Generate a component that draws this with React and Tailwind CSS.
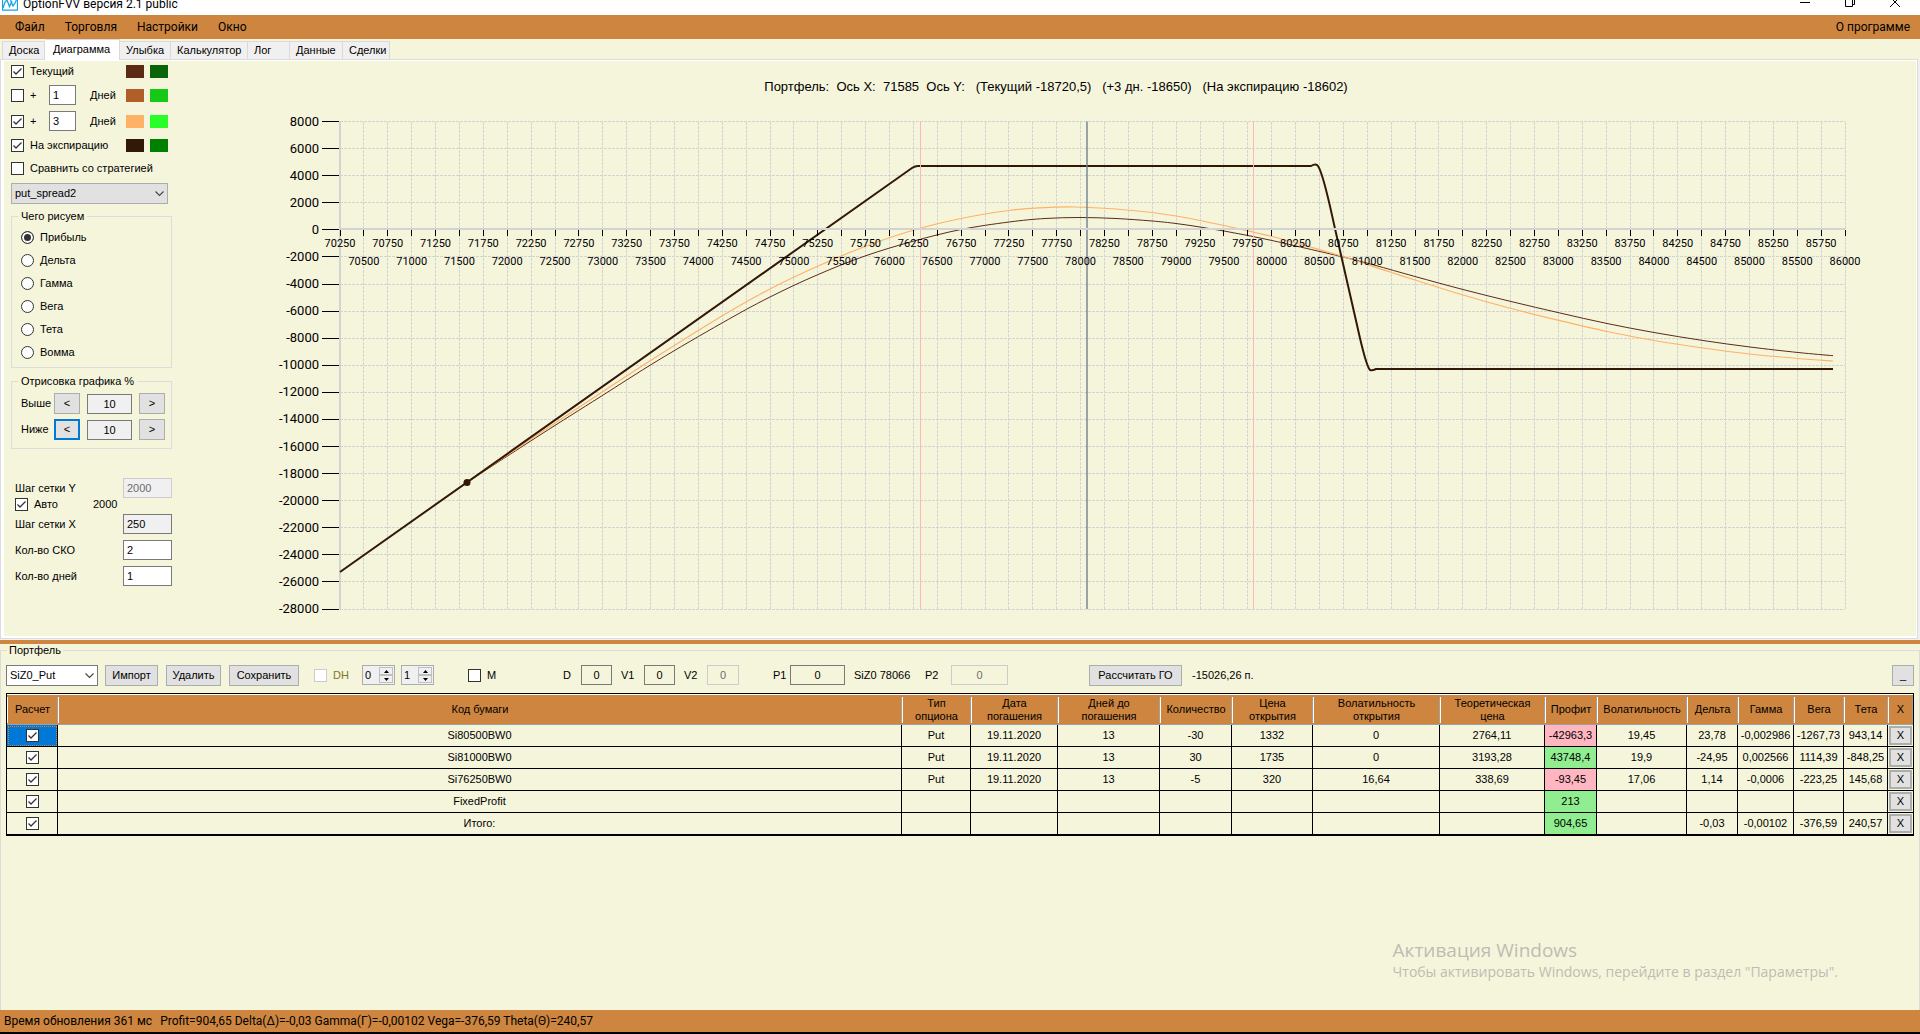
import React, { useState } from 'react';

const MENU = ['Файл', 'Торговля', 'Настройки', 'Окно'];

const TABS = [
  { name: 'Доска', width: 'w-[43px]' },
  { name: 'Диаграмма', width: 'w-[75px]' },
  { name: 'Улыбка', width: 'w-[51px]' },
  { name: 'Калькулятор', width: 'w-[77px]' },
  { name: 'Лог', width: 'w-[42px]' },
  { name: 'Данные', width: 'w-[53px]' },
  { name: 'Сделки', width: 'w-[47px]' },
];

const GREEKS = ['Прибыль', 'Дельта', 'Гамма', 'Вега', 'Тета', 'Вомма'];

const COLUMNS = [
  { title: 'Расчет', width: 'w-[51px]' },
  { title: 'Код бумаги', width: '' },
  { title: 'Тип опциона', width: 'w-[69px]' },
  { title: 'Дата погашения', width: 'w-[87px]' },
  { title: 'Дней до погашения', width: 'w-[102px]' },
  { title: 'Количество', width: 'w-[72px]' },
  { title: 'Цена открытия', width: 'w-[81px]' },
  { title: 'Волатильность открытия', width: 'w-[127px]' },
  { title: 'Теоретическая цена', width: 'w-[105px]' },
  { title: 'Профит', width: 'w-[52px]' },
  { title: 'Волатильность', width: 'w-[90px]' },
  { title: 'Дельта', width: 'w-[51px]' },
  { title: 'Гамма', width: 'w-[56px]' },
  { title: 'Вега', width: 'w-[50px]' },
  { title: 'Тета', width: 'w-[44px]' },
  { title: 'X', width: 'w-[25px]' },
];

const ROWS = [
  ['Si80500BW0', 'Put', '19.11.2020', '13', '-30', '1332', '0', '2764,11', '-42963,3', '19,45', '23,78', '-0,002986', '-1267,73', '943,14'],
  ['Si81000BW0', 'Put', '19.11.2020', '13', '30', '1735', '0', '3193,28', '43748,4', '19,9', '-24,95', '0,002566', '1114,39', '-848,25'],
  ['Si76250BW0', 'Put', '19.11.2020', '13', '-5', '320', '16,64', '338,69', '-93,45', '17,06', '1,14', '-0,0006', '-223,25', '145,68'],
  ['FixedProfit', '', '', '', '', '', '', '', '213', '', '', '', '', ''],
  ['Итого:', '', '', '', '', '', '', '', '904,65', '', '-0,03', '-0,00102', '-376,59', '240,57'],
];
const PROFIT = 8;

// plot area of the chart
const X0 = 340;
const X1 = 1845;
const Y0 = 121.5;
const Y1 = 609;
const ZERO = 230;
const STEP_X = (X1 - X0) / 63;
const STEP_Y = (Y1 - Y0) / 18;

const CURRENT = [
  [466, 483], [540, 435], [600, 397], [657, 361], [722, 323], [769, 297.5], [817, 275], [865, 256], [914, 241],
  [961, 229.5], [1009, 222], [1045, 218.5], [1080, 217.5], [1116, 218.5], [1152, 221], [1176, 223.5],
  [1200, 227], [1224, 231], [1248, 235.5], [1272, 240.5], [1296, 246], [1341, 256.5], [1374, 265], [1415, 276.5],
  [1463, 289.5], [1511, 301.5], [1560, 313], [1607, 323.5], [1654, 332.5], [1703, 340.5], [1750, 347], [1798, 352.5], [1833, 355.7],
];
const PLUS3 = [
  [466, 483], [540, 433], [600, 393.5], [649, 361.5], [722, 316], [769, 289.5], [817, 266.5], [865, 246.5], [914, 230],
  [961, 218.5], [1009, 210.5], [1040, 207.8], [1075, 207], [1116, 209], [1152, 212.5], [1176, 216],
  [1200, 220.5], [1224, 225.5], [1248, 230.8], [1272, 236.5], [1296, 243], [1341, 256], [1390, 272], [1415, 280],
  [1463, 295], [1511, 308.5], [1560, 320.7], [1607, 331.5], [1654, 340.5], [1703, 348], [1750, 354], [1798, 358.5], [1833, 361],
];

// Catmull-Rom spline through the points
const smooth = (pts) => {
  let d = `M${pts[0][0]} ${pts[0][1]}`;
  for (let i = 0; i < pts.length - 1; i++) {
    const a = pts[i - 1] || pts[i];
    const b = pts[i];
    const c = pts[i + 1];
    const e = pts[i + 2] || c;
    d += `C${b[0] + (c[0] - a[0]) / 6} ${b[1] + (c[1] - a[1]) / 6} ${c[0] - (e[0] - b[0]) / 6} ${c[1] - (e[1] - b[1]) / 6} ${c[0]} ${c[1]}`;
  }
  return d;
};

function Check({ checked, disabled, id, label }) {
  const [on, setOn] = useState(!!checked);
  return (
    <span className="relative block h-[13px] w-[13px] shrink-0">
      <input
        id={id}
        type="checkbox"
        aria-label={label}
        checked={on}
        disabled={disabled}
        onChange={() => setOn(!on)}
        className="block h-[13px] w-[13px] appearance-none border border-[#333] bg-white disabled:border-[#ccc]"
      />
      {on && (
        <svg viewBox="0 0 13 13" className="pointer-events-none absolute inset-0 h-[13px] w-[13px]">
          <path d="M2.5 6.5 L5 9 L10.5 3.5" fill="none" stroke="#333" strokeWidth="1.3" />
        </svg>
      )}
    </span>
  );
}

function Field({ value, className = '', ...rest }) {
  return (
    <input
      type="text"
      defaultValue={value}
      className={`h-5 border border-[#7a7a7a] outline-none disabled:border-[#ccc] disabled:text-[#6d6d6d] ${className}`}
      {...rest}
    />
  );
}

function Btn({ children, className = '', ...rest }) {
  return (
    <button type="button" className={`h-[21px] border border-[#adadad] bg-[#e1e1e1] leading-none ${className}`} {...rest}>
      {children}
    </button>
  );
}

function Combo({ value, label, className = '' }) {
  return (
    <div className="relative">
      <select aria-label={label} className={`block h-[21px] appearance-none border px-[3px] outline-none ${className}`}>
        <option>{value}</option>
      </select>
      <svg viewBox="0 0 9 6" className="pointer-events-none absolute top-2 right-1 h-1.5 w-[9px]">
        <path d="M0.5 0.5 L4.5 4.5 L8.5 0.5" fill="none" stroke="#444" strokeWidth="1.1" />
      </svg>
    </div>
  );
}

function Spinner({ value, label }) {
  return (
    <div className="flex h-5 w-[33px] border border-[#adadad] bg-[#f0f0f0] p-px">
      <input type="text" aria-label={label} defaultValue={value} className="w-[15px] bg-transparent pl-px outline-none" />
      <div className="flex flex-1 flex-col">
        <button type="button" aria-label="Больше" className="flex flex-1 items-center justify-center border border-[#c0c0c0]">
          <svg viewBox="0 0 5 3" className="h-[3px] w-[5px]"><path d="M0 3 L2.5 0 L5 3Z" /></svg>
        </button>
        <button type="button" aria-label="Меньше" className="flex flex-1 items-center justify-center border border-[#c0c0c0]">
          <svg viewBox="0 0 5 3" className="h-[3px] w-[5px]"><path d="M0 0 L2.5 3 L5 0Z" /></svg>
        </button>
      </div>
    </div>
  );
}

function TitleBar() {
  return (
    <header className="flex h-[15px] items-start overflow-hidden bg-white pl-0.5 font-[Roboto,sans-serif] text-xs">
      <svg viewBox="0 0 16 11" className="h-[11px] w-4 shrink-0">
        <path d="M0.5 0 V10.2 H15.5 V0" fill="none" stroke="#1ba1e2" strokeWidth="1.2" />
        <path d="M1 8 L3 2 L5 0 L7.5 6.5 L10 1 M8.5 0 L11 6 L13 3 L14.5 0" fill="none" stroke="#1ba1e2" strokeWidth="1.3" />
      </svg>
      <h1 className="-mt-1 ml-[5px] leading-4">OptionFVV версия 2.1 public</h1>
      <div className="ml-auto flex gap-[35px] pr-5">
        <button type="button" aria-label="Свернуть">
          <svg viewBox="0 0 10 8" className="h-2 w-2.5"><path d="M0 2.5 H10" stroke="#000" /></svg>
        </button>
        <button type="button" aria-label="Восстановить">
          <svg viewBox="0 0 10 8" className="h-2 w-2.5"><path d="M0.5 0 V6.5 H7.5 V0 M7.5 4.5 H9.5 V0" fill="none" stroke="#000" /></svg>
        </button>
        <button type="button" aria-label="Закрыть">
          <svg viewBox="0 0 10 8" className="h-2 w-2.5"><path d="M0 7 L7 0 M3 0 L10 7" stroke="#000" /></svg>
        </button>
      </div>
    </header>
  );
}

function DayRow({ id, days, checked, children }) {
  return (
    <div className="flex h-[26px] items-center">
      <Check id={id} checked={checked} />
      <label htmlFor={id} className="ml-1.5 w-[19px]">+</label>
      <Field value={days} aria-label="Количество дней" className="w-[27px] bg-white px-[3px]" />
      <span className="ml-3.5 w-9">Дней</span>
      {children}
    </div>
  );
}

function Swatches({ a, b }) {
  return (
    <div className="ml-auto flex gap-1.5">
      <span className={`h-[13px] w-[18px] ${a}`} />
      <span className={`h-[13px] w-[18px] ${b}`} />
    </div>
  );
}

function Sidebar() {
  const [greek, setGreek] = useState('Прибыль');
  return (
    <aside className="w-44 shrink-0 pr-2 pl-[7px]">
      <div className="pr-1">
        <div className="flex h-[21px] items-center">
          <Check id="cur" checked />
          <label htmlFor="cur" className="ml-1.5">Текущий</label>
          <Swatches a="bg-[#5c2b16]" b="bg-[#0a640a]" />
        </div>
        <DayRow id="d1" days="1"><Swatches a="bg-[#b25e28]" b="bg-[#17c817]" /></DayRow>
        <DayRow id="d3" days="3" checked><Swatches a="bg-[#ffb265]" b="bg-[#28ff28]" /></DayRow>
        <div className="flex h-[22px] items-center">
          <Check id="exp" checked />
          <label htmlFor="exp" className="ml-1.5">На экспирацию</label>
          <Swatches a="bg-[#321808]" b="bg-[#008000]" />
        </div>
        <div className="flex h-6 items-center">
          <Check id="cmp" />
          <label htmlFor="cmp" className="ml-1.5">Сравнить со стратегией</label>
        </div>
        <div className="pt-[3px]">
          <Combo value="put_spread2" label="Стратегия" className="w-full border-[#adadad] bg-[#e1e1e1]" />
        </div>
      </div>

      <fieldset className="mt-1 border border-[#dcdcdc] pb-[3px] pl-[9px]">
        <legend className="-ml-[3px] px-[3px] leading-4">Чего рисуем</legend>
        <div className="pt-0.5">
          {GREEKS.map((g) => (
            <label key={g} className="flex h-[23px] items-center gap-1.5">
              <input
                type="radio"
                name="greek"
                checked={greek === g}
                onChange={() => setGreek(g)}
                className="h-[13px] w-[13px] appearance-none rounded-full border border-[#333] bg-white checked:bg-[#333] checked:shadow-[inset_0_0_0_2px_white]"
              />
              {g}
            </label>
          ))}
        </div>
      </fieldset>

      <fieldset className="mt-[5px] border border-[#dcdcdc] pb-2 pl-[9px]">
        <legend className="-ml-[3px] px-[3px] leading-4">Отрисовка графика %</legend>
        <div className="flex flex-col gap-[5px] pt-1">
          <div className="flex items-center">
            <label htmlFor="up" className="w-[33px]">Выше</label>
            <Btn className="w-[26px]">&lt;</Btn>
            <Field id="up" value="10" className="mx-[7px] w-[45px] bg-[#f0f0f0] text-center" />
            <Btn className="w-[26px]">&gt;</Btn>
          </div>
          <div className="flex items-center">
            <label htmlFor="down" className="w-[33px]">Ниже</label>
            <Btn className="w-[26px] outline-2 -outline-offset-2 outline-[#0078d7]">&lt;</Btn>
            <Field id="down" value="10" className="mx-[7px] w-[45px] bg-[#f0f0f0] text-center" />
            <Btn className="w-[26px]">&gt;</Btn>
          </div>
        </div>
      </fieldset>

      <div className="mt-[29px] pl-1">
        <div className="flex items-center justify-between">
          <label htmlFor="stepy">Шаг сетки Y</label>
          <Field id="stepy" value="2000" disabled className="w-[49px] bg-[#f0f0f0] px-[3px]" />
        </div>
        <div className="flex h-4 items-start leading-[13px]">
          <Check id="auto" checked />
          <label htmlFor="auto" className="ml-1.5 w-[59px]">Авто</label>
          <span>2000</span>
        </div>
        <div className="flex flex-col gap-1.5">
          <div className="flex items-center justify-between">
            <label htmlFor="stepx">Шаг сетки X</label>
            <Field id="stepx" value="250" className="w-[49px] bg-[#f0f0f0] px-[3px]" />
          </div>
          <div className="flex items-center justify-between">
            <label htmlFor="sko">Кол-во СКО</label>
            <Field id="sko" value="2" className="w-[49px] bg-white px-[3px]" />
          </div>
          <div className="flex items-center justify-between">
            <label htmlFor="days">Кол-во дней</label>
            <Field id="days" value="1" className="w-[49px] bg-white px-[3px]" />
          </div>
        </div>
      </div>
    </aside>
  );
}

function Chart() {
  const xs = Array.from({ length: 64 }, (_, i) => i);
  const ys = Array.from({ length: 19 }, (_, i) => i);
  return (
    <svg viewBox="180 61 1736 575" className="block min-w-0 flex-1 font-[Roboto,sans-serif]">
      <text x="1056" y="91" textAnchor="middle" className="font-['Liberation_Sans',sans-serif] text-[13px] whitespace-pre">
        {'Портфель:  Ось X:  71585  Ось Y:   (Текущий -18720,5)   (+3 дн. -18650)   (На экспирацию -18602)'}
      </text>

      <g stroke="#d3d3d3" strokeDasharray="3 1" shapeRendering="crispEdges">
        {xs.map((i) => <path key={i} d={`M${X0 + i * STEP_X} ${Y0}V${Y1}`} />)}
        {ys.map((i) => <path key={i} d={`M${X0} ${Y0 + i * STEP_Y}H${X1}`} />)}
      </g>
      <path d={`M${X0} ${Y0}V${Y1}`} stroke="#d3d3d3" strokeWidth="2" />

      <path d={smooth(CURRENT)} fill="none" stroke="#5c2b16" />
      <path d={smooth(PLUS3)} fill="none" stroke="#ffb265" strokeWidth="1.2" />
      <path
        d="M340 572 L912 168 Q915 166 918 166 H1311 Q1316 163 1318 166 C1324 175 1330 207 1336 233 L1357 325 Q1366 366 1370 370 Q1372 371 1376 369 H1833"
        fill="none"
        stroke="#321808"
        strokeWidth="2"
      />
      <circle cx="467" cy="482.5" r="3.5" fill="#321808" />

      <path d={`M920.5 ${Y0}V${Y1}M1253.5 ${Y0}V${Y1}`} stroke="#ffb6c1" />
      <path d={`M1087 ${Y0}V${Y1}`} stroke="#708090" strokeOpacity="0.7" strokeWidth="2" />
      <path d={`M${X0} 229H${X1}`} stroke="#d3d3d3" strokeWidth="2" />

      <g stroke="#000" shapeRendering="crispEdges">
        {xs.map((i) => <path key={i} d={`M${X0 + i * STEP_X} ${ZERO}v6`} />)}
        {ys.map((i) => <path key={i} d={`M322 ${Y0 + i * STEP_Y}h17`} />)}
      </g>
      <g fontSize="13" textAnchor="end">
        {ys.map((i) => <text key={i} x="319" y={Y0 + i * STEP_Y + 4}>{8000 - i * 2000}</text>)}
      </g>
      <g fontSize="11" textAnchor="middle">
        {xs.map((i) => <text key={i} x={X0 + i * STEP_X} y={i % 2 ? 265 : 247}>{70250 + i * 250}</text>)}
      </g>
    </svg>
  );
}

function Toolbar() {
  return (
    <div className="flex h-7 items-center px-[5px]">
      <Combo value="SiZ0_Put" label="Портфель" className="w-[92px] border-[#7a7a7a] bg-white" />
      <Btn className="ml-[7px] w-[53px]">Импорт</Btn>
      <Btn className="ml-2 w-[55px]">Удалить</Btn>
      <Btn className="ml-2 w-[70px]">Сохранить</Btn>
      <div className="ml-[15px] flex w-12 items-center gap-1.5">
        <Check id="dh" disabled />
        <label htmlFor="dh" className="text-[#7a7a1e]">DH</label>
      </div>
      <div className="flex gap-1.5">
        <Spinner value="0" label="DH от" />
        <Spinner value="1" label="DH до" />
      </div>
      <div className="ml-[34px] flex w-[95px] items-center gap-1.5">
        <Check id="m" />
        <label htmlFor="m">M</label>
      </div>
      <label htmlFor="fd" className="w-[18px]">D</label>
      <Field id="fd" value="0" className="w-[31px] text-center" />
      <label htmlFor="v1" className="ml-[9px] w-[23px]">V1</label>
      <Field id="v1" value="0" className="w-[31px] text-center" />
      <label htmlFor="v2" className="ml-[9px] w-[23px]">V2</label>
      <Field id="v2" value="0" disabled className="w-8 text-center" />
      <label htmlFor="p1" className="ml-[34px] w-[17px]">P1</label>
      <Field id="p1" value="0" className="w-[55px] text-center" />
      <span className="ml-[9px] w-[71px]">SiZ0 78066</span>
      <label htmlFor="p2" className="w-[26px]">P2</label>
      <Field id="p2" value="0" disabled className="w-[57px] text-center" />
      <Btn className="ml-[81px] w-[93px]">Рассчитать ГО</Btn>
      <span className="ml-2.5">-15026,26 п.</span>
      <Btn className="ml-auto w-[22px]" aria-label="Свернуть панель">_</Btn>
    </div>
  );
}

function Portfolio() {
  return (
    <div className="flex-1 border border-t-0 border-black">
      <table className="w-full table-fixed border-separate border-spacing-0 border-t border-black text-center">
        <thead>
          <tr className="h-[31px] bg-[#cd853f]">
            {COLUMNS.map((c) => (
              <th key={c.title} className={`border-t border-b border-t-white border-b-[#a0a0a0] p-0 font-normal ${c.width}`}>
                <div className="flex h-[26px] items-center justify-center border-r border-l border-r-[#a0a0a0] border-l-white leading-[13px]">
                  <span className={c.title.includes(' ') && c.width ? 'w-min' : ''}>{c.title === 'Дней до погашения' ? <>Дней&nbsp;до погашения</> : c.title}</span>
                </div>
              </th>
            ))}
          </tr>
        </thead>
        <tbody>
          {ROWS.map((row, r) => (
            <tr key={row[0]} className="h-[22px]">
              <td className={`border-r border-b border-black p-0 ${r === 0 ? 'bg-[#0078d7] outline-1 -outline-offset-2 outline-dotted outline-[#cd853f]' : ''}`}>
                <div className="flex justify-center"><Check checked label={`Расчет ${row[0]}`} /></div>
              </td>
              {row.map((v, i) => (
                <td
                  key={i}
                  className={`border-r border-b border-black p-0 whitespace-nowrap ${i === PROFIT ? (v.startsWith('-') ? 'bg-[#ffb6c1]' : 'bg-[#90ee90]') : ''}`}
                >
                  {v}
                </td>
              ))}
              <td className="border-b border-black p-px">
                <button type="button" className="block h-[19px] w-full border-2 border-[#adadad] bg-[#e1e1e1] leading-none">X</button>
              </td>
            </tr>
          ))}
        </tbody>
      </table>
    </div>
  );
}

export default function App() {
  const [tab, setTab] = useState('Диаграмма');
  return (
    <div className="relative flex min-h-screen flex-col bg-[#f5f5dc] font-['Liberation_Sans',Arial,sans-serif] text-[11px] leading-[13px] text-black">
      <TitleBar />
      <nav className="flex h-6 items-center bg-[#cd853f] pr-2.5 pl-[15px] font-[Roboto,sans-serif] text-xs">
        <div className="flex gap-5">
          {MENU.map((m) => <button key={m} type="button">{m}</button>)}
        </div>
        <button type="button" className="ml-auto">О программе</button>
      </nav>

      <div className="flex h-5 items-end pl-0.5">
        {TABS.map((t) => (
          <button
            key={t.name}
            type="button"
            onClick={() => setTab(t.name)}
            className={`border border-b-0 border-l-0 border-[#d9d9d9] pl-1.5 text-left whitespace-nowrap first:border-l ${t.width} ${
              tab === t.name ? 'relative -mb-px h-[21px] bg-white pb-0.5 pl-2' : 'h-[18px] bg-[#f0f0f0]'
            }`}
          >
            {t.name}
          </button>
        ))}
      </div>

      <div className="bg-[#f0f0f0] pr-0.5 pb-px">
        <div className="border border-[#dcdcdc]">
          <main className="flex border-t border-r border-b-2 border-l-[3px] border-white bg-[#f5f5dc]">
            <Sidebar />
            <Chart />
          </main>
        </div>
      </div>

      <div className="h-1 bg-[#cd853f]" />

      <fieldset className="flex flex-1 flex-col border border-b-0 border-[#dcdcdc]">
        <legend className="ml-1.5 px-0.5 leading-[13px]">Портфель</legend>
        <div className="flex h-full flex-col pt-1">
          <Toolbar />
          <div className="flex flex-1 flex-col px-[5px] pt-1"><Portfolio /></div>
        </div>
      </fieldset>

      <footer className="flex h-6 items-center gap-2 border-b-2 border-black bg-[#cd853f] pl-1 font-[Roboto,sans-serif] text-xs">
        <span>Время обновления 361 мс</span>
        <span>Profit=904,65 Delta(Δ)=-0,03 Gamma(Γ)=-0,00102 Vega=-376,59 Theta(Θ)=240,57</span>
      </footer>

      <div className="pointer-events-none absolute right-[82px] bottom-[52px] font-['Open_Sans',sans-serif] text-[#bdbdb2]">
        <p className="text-[19px] leading-6">Активация Windows</p>
        <p className="text-sm leading-5">Чтобы активировать Windows, перейдите в раздел "Параметры".</p>
      </div>
    </div>
  );
}
